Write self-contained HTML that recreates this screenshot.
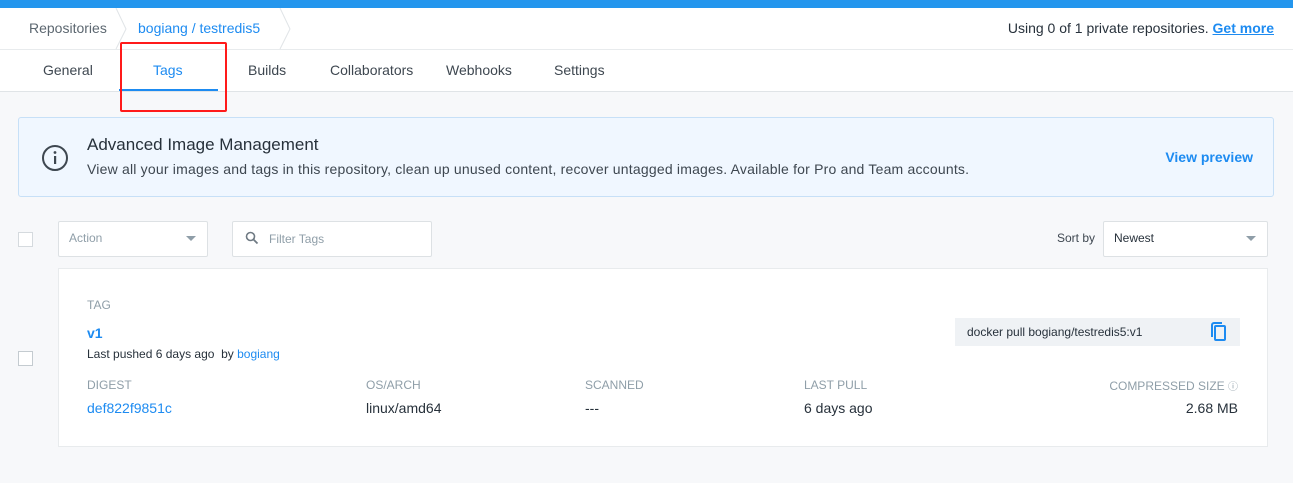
<!DOCTYPE html>
<html><head><style>
*{box-sizing:border-box;margin:0;padding:0}
body{width:1293px;height:483px;background:#f7f8fa;font-family:"Liberation Sans",sans-serif;position:relative;overflow:hidden;color:#27313b}
.a{position:absolute;white-space:nowrap}
.blue{color:#1d8bf1}
.grey{color:#8f9ea8}
</style></head><body>
<div class="a" style="left:0;top:0;width:1293px;height:8px;background:#2496ed"></div>
<div class="a" style="left:0;top:8px;width:1293px;height:84px;background:#fff;border-bottom:1px solid #e0e4e7"></div>
<div class="a" style="left:0;top:49px;width:1293px;height:1px;background:#e8ebed"></div>
<svg class="a" style="left:110px;top:8px" width="190" height="42"><polyline points="6,0 16,21 6,41" fill="none" stroke="#e0e4e7"/><polyline points="170,0 180,21 170,41" fill="none" stroke="#e0e4e7"/></svg>
<div class="a" style="left:29px;top:20px;font-size:14px;color:#5c6770">Repositories</div>
<div class="a blue" style="left:138px;top:20px;font-size:14px">bogiang / testredis5</div>
<div class="a" style="right:19px;top:20px;font-size:14px;color:#27313b">Using 0 of 1 private repositories. <span class="blue" style="text-decoration:underline;font-weight:bold">Get more</span></div>
<div class="a" style="left:43px;top:62px;font-size:14px;color:#3e4750">General</div>
<div class="a blue" style="left:153px;top:62px;font-size:14px">Tags</div>
<div class="a" style="left:119px;top:89px;width:99px;height:2px;background:#1d8bf1"></div>
<div class="a" style="left:120px;top:42px;width:107px;height:70px;border:2px solid #ff1a1a;border-radius:2px"></div>
<div class="a" style="left:248px;top:62px;font-size:14px;color:#3e4750">Builds</div>
<div class="a" style="left:330px;top:62px;font-size:14px;color:#3e4750">Collaborators</div>
<div class="a" style="left:446px;top:62px;font-size:14px;color:#3e4750">Webhooks</div>
<div class="a" style="left:554px;top:62px;font-size:14px;color:#3e4750">Settings</div>
<div class="a" style="left:18px;top:117px;width:1256px;height:80px;background:#f0f7ff;border:1px solid #c7e0f7;border-radius:3px"></div>
<svg class="a" style="left:41px;top:144px" width="28" height="28"><circle cx="14" cy="14" r="12" fill="none" stroke="#3e4750" stroke-width="2"/><rect x="13" y="12" width="2.2" height="8" fill="#3e4750"/><circle cx="14" cy="8.5" r="1.4" fill="#3e4750"/></svg>
<div class="a" style="left:87px;top:135px;font-size:17px;color:#27313b">Advanced Image Management</div>
<div class="a" style="left:87px;top:161px;font-size:14px;color:#3e4750;letter-spacing:0.2px">View all your images and tags in this repository, clean up unused content, recover untagged images. Available for Pro and Team accounts.</div>
<div class="a blue" style="right:40px;top:149px;font-size:14px;font-weight:bold">View preview</div>
<div class="a" style="left:18px;top:232px;width:15px;height:15px;border:1px solid #d5dade;background:#fff"></div>
<div class="a" style="left:58px;top:221px;width:150px;height:36px;border:1px solid #dde1e4;background:#fff;border-radius:2px"></div>
<div class="a grey" style="left:69px;top:231px;font-size:12px">Action</div>
<div class="a" style="left:186px;top:236px;border:5px solid transparent;border-top:5px solid #8f9ea8"></div>
<div class="a" style="left:232px;top:221px;width:200px;height:36px;border:1px solid #dde1e4;background:#fff;border-radius:2px"></div>
<svg class="a" style="left:245px;top:231px" width="14" height="14"><circle cx="5.5" cy="5.5" r="4" fill="none" stroke="#6f7a83" stroke-width="1.6"/><line x1="8.5" y1="8.5" x2="12.5" y2="12.5" stroke="#6f7a83" stroke-width="1.8"/></svg>
<div class="a grey" style="left:269px;top:232px;font-size:12px">Filter Tags</div>
<div class="a" style="left:1057px;top:231px;font-size:12px;color:#3e4750">Sort by</div>
<div class="a" style="left:1103px;top:221px;width:165px;height:36px;border:1px solid #dde1e4;background:#fff;border-radius:2px"></div>
<div class="a" style="left:1114px;top:231px;font-size:12px;color:#27313b">Newest</div>
<div class="a" style="left:1246px;top:236px;border:5px solid transparent;border-top:5px solid #8f9ea8"></div>
<div class="a" style="left:58px;top:268px;width:1210px;height:179px;background:#fff;border:1px solid #e8ebed"></div>
<div class="a" style="left:18px;top:351px;width:15px;height:15px;border:1px solid #c4cbd0;background:#fff"></div>
<div class="a grey" style="left:87px;top:298px;font-size:12px">TAG</div>
<div class="a blue" style="left:87px;top:325px;font-size:14px;font-weight:bold">v1</div>
<div class="a" style="left:87px;top:347px;font-size:12px;color:#27313b">Last pushed 6 days ago &nbsp;by <span class="blue">bogiang</span></div>
<div class="a" style="left:955px;top:318px;width:285px;height:28px;background:#eff2f5"></div>
<div class="a" style="left:967px;top:325px;font-size:12px;color:#27313b">docker pull bogiang/testredis5:v1</div>
<svg class="a" style="left:1210px;top:322px" width="18" height="20"><path d="M2 3v12" stroke="#1d8bf1" stroke-width="2" fill="none"/><rect x="5" y="4" width="10" height="14" rx="1" fill="none" stroke="#1d8bf1" stroke-width="2"/><path d="M2 3a2 2 0 0 1 2-2h8" stroke="#1d8bf1" stroke-width="2" fill="none"/></svg>
<div class="a grey" style="left:87px;top:378px;font-size:12px">DIGEST</div>
<div class="a blue" style="left:87px;top:400px;font-size:14px">def822f9851c</div>
<div class="a grey" style="left:366px;top:378px;font-size:12px">OS/ARCH</div>
<div class="a" style="left:366px;top:400px;font-size:14px">linux/amd64</div>
<div class="a grey" style="left:585px;top:378px;font-size:12px">SCANNED</div>
<div class="a" style="left:585px;top:400px;font-size:14px">---</div>
<div class="a grey" style="left:804px;top:378px;font-size:12px">LAST PULL</div>
<div class="a" style="left:804px;top:400px;font-size:14px">6 days ago</div>
<div class="a grey" style="right:55px;top:378px;font-size:12px">COMPRESSED SIZE <span style="font-size:10px">ⓘ</span></div>
<div class="a" style="right:55px;top:400px;font-size:14px">2.68 MB</div>
</body></html>
